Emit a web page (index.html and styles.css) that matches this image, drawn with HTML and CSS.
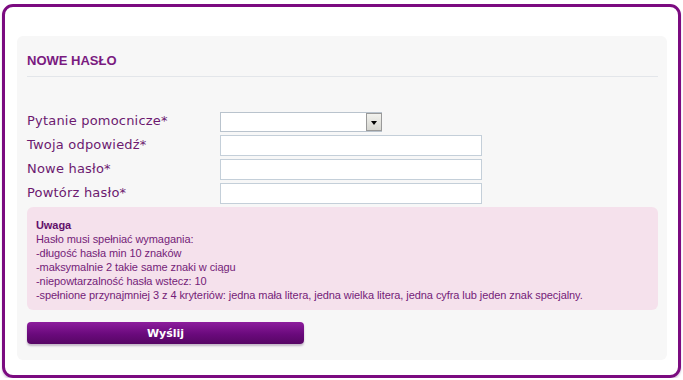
FILE: index.html
```html
<!DOCTYPE html>
<html lang="pl">
<head>
    <meta charset="UTF-8">
    <title>Nowe hasło</title>
    <link rel="stylesheet" href="styles.css">
</head>
<body>

    <!-- Ramka główna -->
    <div class="ramka">
        <div class="panel">
            <h1>NOWE HASŁO</h1>

            <form class="formularz">
                <div class="wiersz">
                    <label for="pytanie">Pytanie pomocnicze*</label>
                    <span class="lista">
                        <select id="pytanie" name="pytanie">
                            <option value=""></option>
                        </select>
                    </span>
                </div>
                <div class="wiersz">
                    <label for="odpowiedz">Twoja odpowiedź*</label>
                    <input type="text" id="odpowiedz" name="odpowiedz">
                </div>
                <div class="wiersz">
                    <label for="haslo">Nowe hasło*</label>
                    <input type="password" id="haslo" name="haslo">
                </div>
                <div class="wiersz">
                    <label for="haslo2">Powtórz hasło*</label>
                    <input type="password" id="haslo2" name="haslo2">
                </div>

                <div class="uwaga">
                    <strong>Uwaga</strong>
                    <p>Hasło musi spełniać wymagania:</p>
                    <p>-długość hasła min 10 znaków</p>
                    <p>-maksymalnie 2 takie same znaki w ciągu</p>
                    <p>-niepowtarzalność hasła wstecz: 10</p>
                    <p>-spełnione przynajmniej 3 z 4 kryteriów: jedna mała litera, jedna wielka litera, jedna cyfra lub jeden znak specjalny.</p>
                </div>

                <button type="button">Wyślij</button>
            </form>
        </div>
    </div>

</body>
</html>
```

FILE: styles.css
```css
body {
    margin: 0;
    background-color: #fff;
    font-family: "DejaVu Sans", Verdana, sans-serif;
}

/* Ramka */
.ramka {
    box-sizing: border-box;
    margin: 4px 2px 0 2px;
    height: 374px;
    border: 3px solid #7b0b80;
    border-radius: 11px;
    padding: 29px 11px 0 12px;
    box-shadow: 0 2px 2px rgba(150, 110, 160, 0.35);
}

.panel {
    background-color: #f7f7f7;
    border-radius: 6px;
    padding: 15px 9px 15px 10px;
    height: 294px;
}

h1 {
    margin: 0;
    font-family: "Liberation Sans", Arial, sans-serif;
    font-size: 13px;
    line-height: 20px;
    color: #7a1a80;
    padding-bottom: 5px;
    border-bottom: 1px solid #e3e6ea;
}

/* Formularz */
.formularz {
    padding-top: 34px;
}

.wiersz {
    display: flex;
    align-items: center;
    height: 21px;
    margin-bottom: 3px;
}

.wiersz label {
    width: 193px;
    font-size: 13px;
    letter-spacing: 0.2px;
    line-height: 17px;
    margin-top: -3px;
    color: #6c1a70;
}

.wiersz input {
    box-sizing: border-box;
    width: 262px;
    height: 21px;
    margin: 0;
    border: 1px solid #c4cfd9;
    background-color: #fff;
}

.lista {
    position: relative;
    display: block;
    width: 162px;
    height: 20px;
}

.lista select {
    box-sizing: border-box;
    width: 162px;
    height: 20px;
    margin: 0;
    border: 1px solid #b9c3cd;
    background-color: #fff;
    appearance: none;
}

/* przycisk listy */
.lista::after {
    content: "";
    position: absolute;
    top: 1px;
    right: 0;
    width: 16px;
    height: 18px;
    border: 1px solid #9a9a9a;
    box-sizing: border-box;
    background: linear-gradient(#f2f2ee, #d6d6d0);
}

.lista::before {
    content: "";
    position: absolute;
    top: 9px;
    right: 5px;
    border-left: 3px solid transparent;
    border-right: 3px solid transparent;
    border-top: 4px solid #000;
    z-index: 2;
}

.uwaga {
    margin-top: 0;
    padding: 11px 9px 8px 9px;
    background-color: #f5e1ec;
    border-radius: 6px;
    font-family: "Liberation Sans", Tahoma, sans-serif;
    font-size: 11px;
    letter-spacing: -0.07px;
    line-height: 14px;
    color: #741c78;
}

.uwaga strong {
    display: block;
    color: #62106a;
}

.uwaga p {
    margin: 0;
}

button {
    display: block;
    margin-top: 12px;
    width: 277px;
    height: 22px;
    border: none;
    border-radius: 4px;
    background: linear-gradient(#8d1d9d, #6a0a7c 55%, #570665);
    box-shadow: 0 2px 2px rgba(120, 90, 130, 0.4);
    color: #fff;
    font-family: "DejaVu Sans", Verdana, sans-serif;
    font-weight: bold;
    font-size: 11px;
    cursor: pointer;
}
```
